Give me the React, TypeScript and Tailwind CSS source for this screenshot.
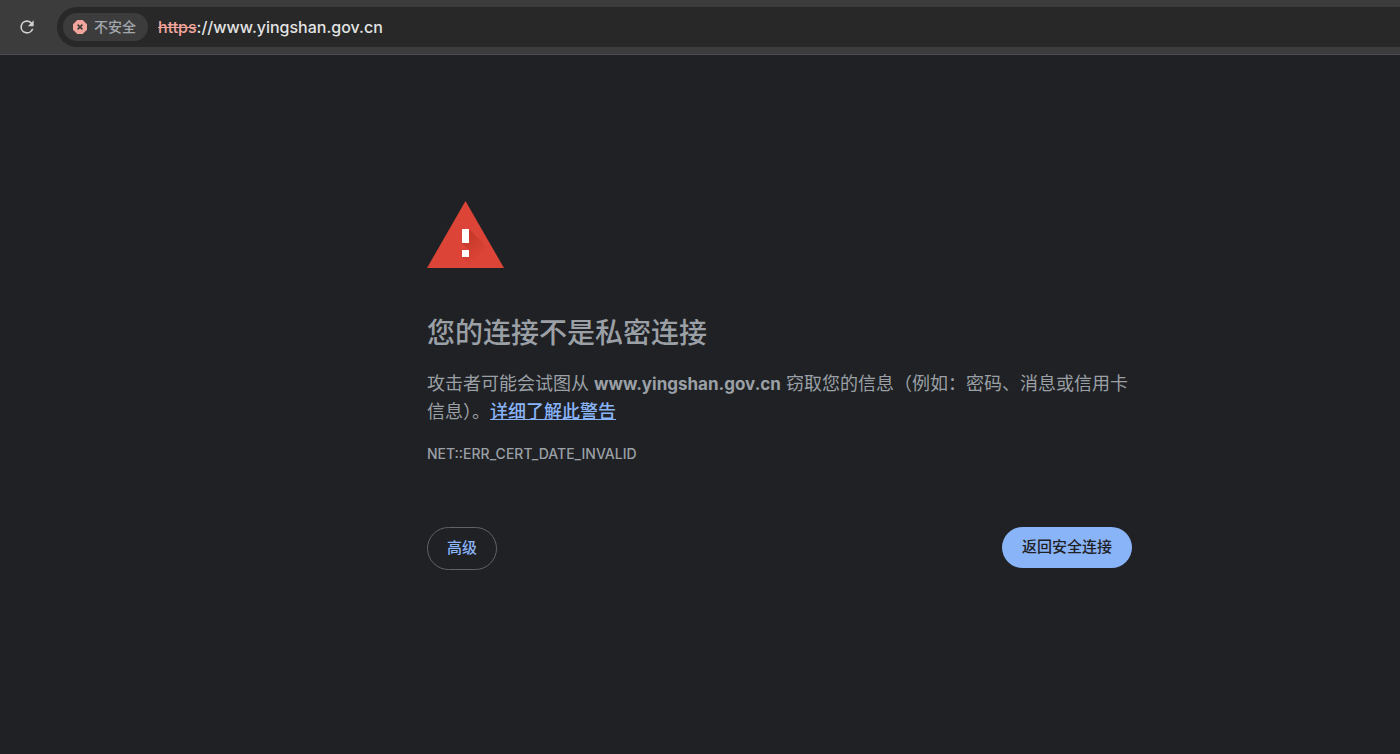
import React from "react";

function ReloadIcon() {
  return (
    <svg viewBox="0 0 24 24" className="size-5" fill="#d0d0d0" aria-hidden="true">
      <path d="M17.65 6.35A7.96 7.96 0 0 0 12 4a8 8 0 1 0 7.73 10h-2.08A6 6 0 1 1 12 6c1.66 0 3.14.69 4.22 1.78L13 11h7V4z" />
    </svg>
  );
}

function DangerIcon() {
  return (
    <svg viewBox="0 0 14 14" className="size-3.5" aria-hidden="true">
      <path d="M4.3 0h5.4L14 4.3v5.4L9.7 14H4.3L0 9.7V4.3z" fill="#f2a59b" />
      <path d="M4.6 4.6l4.8 4.8M9.4 4.6l-4.8 4.8" stroke="#3c3c3c" strokeWidth="1.6" />
    </svg>
  );
}

function WarningIcon() {
  return (
    <svg viewBox="0 0 77 67" className="h-[67px] w-[77px]" role="img" aria-label="警告">
      <defs>
        <linearGradient id="shade" gradientUnits="userSpaceOnUse" x1="38" y1="36" x2="55" y2="53">
          <stop offset="0" stopColor="#a52714" stopOpacity="0.4" />
          <stop offset="1" stopColor="#a52714" stopOpacity="0" />
        </linearGradient>
      </defs>
      <path d="M38.5 0L77 67H0z" fill="#db4437" />
      <path d="M42 28l35 35v4H46L35 56l7-7-7-7z" fill="url(#shade)" />
      <path d="M35 28h7v14h-7zM35 49h7v7h-7z" fill="#fff" />
    </svg>
  );
}

function Toolbar() {
  return (
    <header className="flex h-[55px] items-center border-b border-[#4a4c4f] bg-[#3c3c3c]">
      <button type="button" aria-label="重新加载" className="ml-[17px] flex size-5 items-center justify-center">
        <ReloadIcon />
      </button>
      <div className="ml-5 flex h-10 flex-1 items-center rounded-l-full bg-[#282828] pl-1.5">
        <button
          type="button"
          className="flex h-7 items-center gap-[7px] rounded-full bg-[#3c3c3c] pr-3 pl-2.5 text-sm font-medium text-[#a2a7ad]"
        >
          <DangerIcon />
          不安全
        </button>
        <div className="ml-2.5 text-base font-medium text-[#e3e3e3]">
          <span className="text-[#f2a59b] line-through">https</span>://www.yingshan.gov.cn
        </div>
      </div>
    </header>
  );
}

export default function App() {
  return (
    <div className="min-h-screen bg-[#202124] font-['Inter','Noto_Sans_CJK_SC',sans-serif] text-[#9aa0a6]" lang="zh-CN">
      <Toolbar />
      <main className="pt-[146px] pl-[159px]">
        <div className="mx-auto max-w-[705px]">
          <WarningIcon />
          <h1 className="mt-12 text-[28px] leading-[34px] font-medium">您的连接不是私密连接</h1>
          <p className="mt-5 text-lg leading-7">
            攻击者可能会试图从 <strong className="text-[17px] font-bold">www.yingshan.gov.cn</strong>{" "}
            窃取您的信息（例如：密码、消息或信用卡信息）。
            <a href="#learn-more" className="font-medium text-[#8ab4f8] underline">
              详细了解此警告
            </a>
          </p>
          <p className="mt-[18px] text-sm leading-5 font-medium">NET::ERR_CERT_DATE_INVALID</p>
          <div className="mt-[63px] flex items-start justify-between">
            <button
              type="button"
              className="h-[43px] rounded-full border border-[#5f6368] px-[19px] text-[15px] font-medium text-[#8ab4f8]"
            >
              高级
            </button>
            <button
              type="button"
              className="h-[41px] rounded-full bg-[#8ab4f8] px-5 text-[15px] font-medium text-[#202124]"
            >
              返回安全连接
            </button>
          </div>
        </div>
      </main>
    </div>
  );
}
